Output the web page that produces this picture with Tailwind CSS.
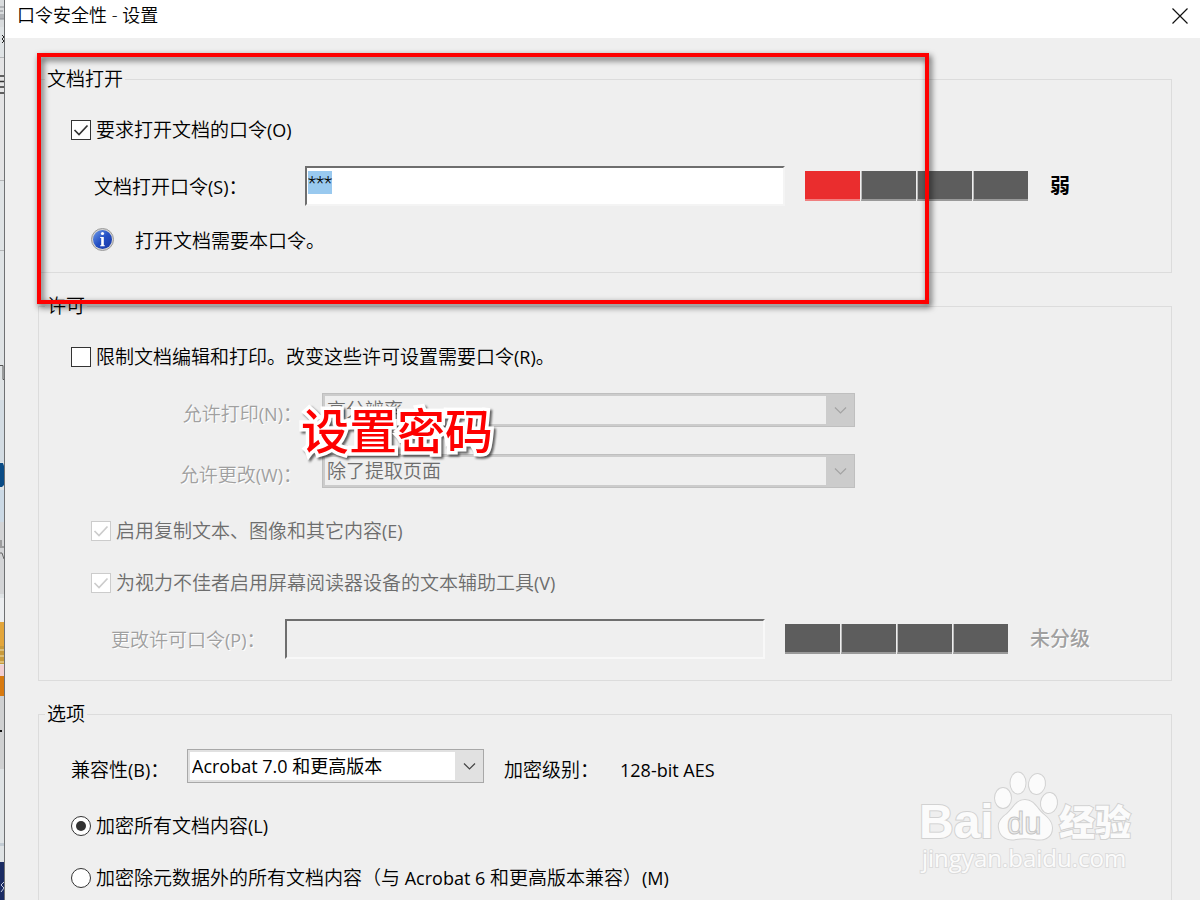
<!DOCTYPE html>
<html lang="zh-CN">
<head>
    <meta charset="UTF-8">
    <meta name="viewport" content="width=device-width, initial-scale=1.0">
    <title>口令安全性 - 设置</title>
    <script src="https://cdn.jsdelivr.net/npm/@tailwindcss/browser@4"></script>
</head>
<body class="relative flex h-screen overflow-hidden bg-[#efefef] font-['Open_Sans','Noto_Sans_CJK_SC',sans-serif] text-[19px] leading-[26px] font-[350] text-black">
    <!-- Window behind the dialog -->
    <svg class="h-full w-[5px] shrink-0" viewBox="0 0 5 900" preserveAspectRatio="xMinYMin slice" aria-hidden="true">
        <rect width="5" height="900" fill="#dfe3e5"/>
        <rect width="5" height="27" fill="#d9dcde"/>
        <path d="M0 7h4M0 11h3M1 14v5M3 14v5M0 19h4" stroke="#8a8d92" fill="none"/>
        <path d="M2 35l2 2-2 2 2 2-2 2" stroke="#222" fill="none"/>
        <path d="M0 57.500h4M0 180.500h4M0 250.500h4" stroke="#b4b6b8"/>
        <rect y="58" width="4" height="122" fill="#e4e4e5"/>
        <path d="M0 76h5M0 81.500h5M0 87h5M0 93h5" stroke="#333" stroke-width="1.500"/>
        <path d="M0 365.500h3v14h2" stroke="#555" fill="none"/>
        <rect y="400" width="4" height="62" fill="#d3dce3"/>
        <path d="M0 463h3l1 3v19l-2 2H0z" fill="#0b4c86"/>
        <rect y="490" width="4" height="32" fill="#cbd9e5"/>
        <rect y="522" width="4" height="72" fill="#d3d4d6"/>
        <path d="M0 547h4M1 540v6M0 553h2l2 6" stroke="#666" fill="none"/>
        <rect y="598" width="4" height="24" fill="#eceef0"/>
        <rect y="622" width="4" height="24" fill="#e3a63b"/>
        <rect y="646" width="4" height="18" fill="#c99b3c"/>
        <path d="M0 650h4M0 656h4M0 662h4" stroke="#f3e3b4"/>
        <rect y="665" width="4" height="11" fill="#f2cfd2"/>
        <rect y="676" width="4" height="20" fill="#d87a10"/>
        <rect y="696" width="4" height="73" fill="#cfd0d1"/>
        <rect y="730" width="2" height="2" fill="#111"/>
        <rect y="843" width="4" height="3" fill="#c3ccd4"/>
        <rect y="862" width="4" height="38" fill="#1a2b63"/>
        <path d="M4 882l-3 3 3 3-3 4" stroke="#c7cde0" fill="none"/>
        <rect x="4" width="1" height="900" fill="#6f7173"/>
    </svg>

    <main class="flex min-w-0 flex-1 flex-col">
        <!-- Title bar -->
        <header class="flex h-[38px] shrink-0 items-start justify-between bg-white pt-0.5 pr-3 pl-3">
            <h1 class="text-[18px]">口令安全性 - 设置</h1>
            <button type="button" aria-label="关闭" class="mt-1.5 size-4">
                <svg class="size-4" viewBox="0 0 16 16" fill="none" stroke="#111" stroke-width="1.200"><path d="M.5.500l15 15M15.500.500l-15 15"/></svg>
            </button>
        </header>

        <form class="flex min-h-0 flex-1 flex-col gap-5 pt-7 pr-7 pl-[33px]">
            <!-- Document open -->
            <fieldset class="h-[207px] border border-[#dcdcdc]">
                <legend class="ml-1.5 px-0.5">文档打开</legend>
                <div class="flex flex-col pt-[25px] pl-8">
                    <label class="flex items-center gap-[5px]">
                        <span class="grid *:col-start-1 *:row-start-1">
                            <input type="checkbox" checked class="size-5 appearance-none border border-[#333] bg-white">
                            <svg class="pointer-events-none size-5" viewBox="0 0 20 20" fill="none" stroke="#333" stroke-width="1.700"><path d="M3.500 10l4.500 4.500L16.500 5.500"/></svg>
                        </span>
                        <span>要求打开文档的口令<span class="text-[18px] font-normal">(O)</span></span>
                    </label>
                    <div class="mt-[23px] flex items-center pl-[23px]">
                        <label for="openPassword" class="w-[211px] pt-0.5">文档打开口令<span class="text-[18px] font-normal">(S)</span>：</label>
                        <input type="text" id="openPassword" value="***" autocomplete="off" spellcheck="false"
                               class="h-10 w-[480px] border-2 border-t-[#6e6e6e] border-r-[#f4f4f4] border-b-[#f4f4f4] border-l-[#6e6e6e] bg-white pb-2 pl-px font-[Roboto,sans-serif] leading-[26px] font-light outline-none selection:bg-[#99c9ef] selection:text-black">
                        <div class="ml-5 flex gap-px" role="img" aria-label="口令强度：弱">
                            <span class="h-[30px] w-[55px] border-b-2 border-[#f07f7f] bg-[#ea2d2e]"></span>
                            <span class="h-[30px] w-[55px] border-b-2 border-l border-b-[#999] border-l-[#bbb] bg-[#5d5d5d]"></span>
                            <span class="h-[30px] w-[55px] border-b-2 border-l border-b-[#999] border-l-[#bbb] bg-[#5d5d5d]"></span>
                            <span class="h-[30px] w-[55px] border-b-2 border-l border-b-[#999] border-l-[#bbb] bg-[#5d5d5d]"></span>
                        </div>
                        <span class="ml-[22px] text-[20px] font-bold">弱</span>
                    </div>
                    <div class="mt-5 flex items-center gap-5 pl-5">
                        <svg class="size-6" viewBox="0 0 24 24" aria-hidden="true">
                            <defs>
                                <linearGradient id="infoBlue" x1="0" y1="0" x2="1" y2="1">
                                    <stop offset="0" stop-color="#6f9be8"/>
                                    <stop offset=".5" stop-color="#2450c4"/>
                                    <stop offset="1" stop-color="#1634a4"/>
                                </linearGradient>
                            </defs>
                            <circle cx="11.500" cy="11.500" r="11" fill="#d3d3d3" stroke="#9a9a9a"/>
                            <circle cx="11.500" cy="11.500" r="9.500" fill="url(#infoBlue)"/>
                            <circle cx="11.500" cy="5.500" r="1.600" fill="#fff"/>
                            <path d="M10.200 9h2.600v8.200h1v1.100H9.200v-1.100h1V10h-1V9z" fill="#fff"/>
                        </svg>
                        <span class="pt-0.5">打开文档需要本口令。</span>
                    </div>
                </div>
            </fieldset>

            <!-- Permissions -->
            <fieldset class="h-[388px] border border-[#dcdcdc]">
                <legend class="ml-1.5 px-0.5">许可</legend>
                <div class="flex flex-col pt-[25px] pl-8">
                    <label class="flex items-center gap-[5px]">
                        <input type="checkbox" class="size-5 appearance-none border border-[#333] bg-white">
                        <span>限制文档编辑和打印。改变这些许可设置需要口令<span class="text-[18px] font-normal">(R)</span>。</span>
                    </label>
                    <div class="mt-[23px] flex items-center">
                        <label for="printing" class="w-[231px] pt-2 text-right text-[#a0a0a0] text-shadow-[1px_1px_0_#fff]">允许打印<span class="text-[18px] font-normal">(N)</span>：</label>
                        <div class="relative ml-5 h-[34px] w-[533px]">
                            <select id="printing" disabled class="block size-full appearance-none border border-[#bfbfbf] bg-[#efefef] pl-1 text-[#6d6d6d] opacity-100 inset-shadow-[0_0_0_2px_#ccc]"><option>高分辨率</option></select>
                            <svg class="pointer-events-none absolute top-px right-px h-8 w-7 bg-[#ccc]" viewBox="0 0 28 32" fill="none" stroke="#a3a3a3" stroke-width="1.200"><path d="M9 13.500l5.500 5.500 5.500-5.500"/></svg>
                        </div>
                    </div>
                    <div class="mt-[27px] flex items-center">
                        <label for="changes" class="w-[231px] pt-2 text-right text-[#a0a0a0] text-shadow-[1px_1px_0_#fff]">允许更改<span class="text-[18px] font-normal">(W)</span>：</label>
                        <div class="relative ml-5 h-[34px] w-[533px]">
                            <select id="changes" disabled class="block size-full appearance-none border border-[#bfbfbf] bg-[#efefef] pl-1 text-[#6d6d6d] opacity-100 inset-shadow-[0_0_0_2px_#ccc]"><option>除了提取页面</option></select>
                            <svg class="pointer-events-none absolute top-px right-px h-8 w-7 bg-[#ccc]" viewBox="0 0 28 32" fill="none" stroke="#a3a3a3" stroke-width="1.200"><path d="M9 13.500l5.500 5.500 5.500-5.500"/></svg>
                        </div>
                    </div>
                    <label class="mt-[30px] flex items-center gap-[5px] pl-5 text-[#6d6d6d]">
                        <span class="grid *:col-start-1 *:row-start-1">
                            <input type="checkbox" checked disabled class="size-5 appearance-none border border-[#ccc] bg-white">
                            <svg class="pointer-events-none size-5" viewBox="0 0 20 20" fill="none" stroke="#ccc" stroke-width="1.700"><path d="M3.500 10l4.500 4.500L16.500 5.500"/></svg>
                        </span>
                        <span>启用复制文本、图像和其它内容<span class="text-[18px] font-normal">(E)</span></span>
                    </label>
                    <label class="mt-[26px] flex items-center gap-[5px] pl-5 text-[#6d6d6d]">
                        <span class="grid *:col-start-1 *:row-start-1">
                            <input type="checkbox" checked disabled class="size-5 appearance-none border border-[#ccc] bg-white">
                            <svg class="pointer-events-none size-5" viewBox="0 0 20 20" fill="none" stroke="#ccc" stroke-width="1.700"><path d="M3.500 10l4.500 4.500L16.500 5.500"/></svg>
                        </span>
                        <span>为视力不佳者启用屏幕阅读器设备的文本辅助工具<span class="text-[18px] font-normal">(V)</span></span>
                    </label>
                    <div class="mt-[23px] flex items-center pl-10">
                        <label for="permPassword" class="w-[174px] pt-0.5 text-[#a0a0a0] text-shadow-[1px_1px_0_#fff]">更改许可口令<span class="text-[18px] font-normal">(P)</span>：</label>
                        <input type="password" id="permPassword" disabled
                               class="h-10 w-[480px] border-2 border-t-[#6e6e6e] border-r-[#f8f8f8] border-b-[#f8f8f8] border-l-[#6e6e6e] bg-[#efefef] px-0.5">
                        <div class="ml-5 flex gap-px" role="img" aria-label="口令强度：未分级">
                            <span class="h-[30px] w-[55px] border-b-2 border-[#999] bg-[#5d5d5d]"></span>
                            <span class="h-[30px] w-[55px] border-b-2 border-l border-b-[#999] border-l-[#bbb] bg-[#5d5d5d]"></span>
                            <span class="h-[30px] w-[55px] border-b-2 border-l border-b-[#999] border-l-[#bbb] bg-[#5d5d5d]"></span>
                            <span class="h-[30px] w-[55px] border-b-2 border-l border-b-[#999] border-l-[#bbb] bg-[#5d5d5d]"></span>
                        </div>
                        <span class="ml-[22px] text-[20px] font-medium text-[#a0a0a0] text-shadow-[1px_1px_0_#fff]">未分级</span>
                    </div>
                </div>
            </fieldset>

            <!-- Options -->
            <fieldset class="flex-1 border border-b-0 border-[#dcdcdc]">
                <legend class="ml-1.5 px-0.5">选项</legend>
                <div class="flex flex-col pt-[22px] pl-8">
                    <div class="flex items-center">
                        <label for="compat" class="w-[116px] pt-2">兼容性<span class="text-[18px] font-normal">(B)</span>：</label>
                        <div class="relative h-[34px] w-[297px]">
                            <select id="compat" class="block size-full appearance-none border border-[#a8a8a8] bg-white pl-1 text-[18px] font-normal inset-shadow-[0_0_0_2px_#e1e1e1]"><option>Acrobat 7.0 和更高版本</option></select>
                            <svg class="pointer-events-none absolute top-px right-px h-8 w-7 bg-[#e1e1e1]" viewBox="0 0 28 32" fill="none" stroke="#444" stroke-width="1.200"><path d="M9 13.500l5.500 5.500 5.500-5.500"/></svg>
                        </div>
                        <span class="ml-5 w-[116px] pt-2">加密级别：</span>
                        <span class="pt-2 text-[18px] font-normal">128-bit AES</span>
                    </div>
                    <label class="mt-[30px] flex items-center gap-[5px]">
                        <span class="grid *:col-start-1 *:row-start-1">
                            <input type="radio" name="scope" checked class="size-5 appearance-none rounded-full border border-[#333] bg-white">
                            <svg class="pointer-events-none size-5" viewBox="0 0 20 20"><circle cx="10" cy="10" r="5" fill="#333"/></svg>
                        </span>
                        <span>加密所有文档内容<span class="text-[18px] font-normal">(L)</span></span>
                    </label>
                    <label class="mt-[26px] flex items-center gap-[5px]">
                        <input type="radio" name="scope" class="size-5 appearance-none rounded-full border border-[#333] bg-white">
                        <span>加密除元数据外的所有文档内容（与<span class="text-[18px] font-normal"> Acrobat 6 </span>和更高版本兼容）<span class="text-[18px] font-normal">(M)</span></span>
                    </label>
                </div>
            </fieldset>
        </form>
    </main>

    <!-- Highlight frame and caption -->
    <div class="pointer-events-none absolute top-[53px] left-[37px] h-[251px] w-[892px] border-4 border-[#fe0000] drop-shadow-[2px_3px_3px_rgba(0,0,0,0.7)]"></div>
    <p class="pointer-events-none absolute top-[401px] left-[301px] text-[48px] leading-[60px] font-medium text-[#fe0000] drop-shadow-[2px_2px_1px_rgba(0,0,0,0.6)] [-webkit-text-stroke:7px_#fff] [paint-order:stroke_fill]">设置密码</p>

    <!-- Watermark -->
    <svg class="pointer-events-none absolute top-[765px] left-[915px] h-[115px] w-[230px]" viewBox="0 0 230 115" aria-hidden="true">
        <g fill="#fbfbfb" stroke="#d2d2d2" stroke-width="2" paint-order="stroke">
            <ellipse cx="88" cy="33" rx="8" ry="10"/>
            <ellipse cx="103" cy="18" rx="7.500" ry="10.500"/>
            <ellipse cx="122" cy="19" rx="8" ry="10" transform="rotate(10 122 19)"/>
            <ellipse cx="134" cy="38" rx="8" ry="10" transform="rotate(8 134 38)"/>
            <path d="M110 35c-9 0-12 9-18 14-6 4-9 9-8 14 1 9 9 13 17 11 6-1 12-1 18 0 9 2 18-1 18-11 0-6-4-10-9-14-6-5-9-14-18-14z"/>
            <text x="4" y="73" font-family="Liberation Sans" font-weight="700" font-size="48">Bai</text>
            <text x="144" y="71" font-family="Noto Sans CJK SC" font-weight="900" font-size="36">经验</text>
            <text x="7" y="102" font-family="Open Sans" font-weight="400" font-size="24" stroke="#dcdcdc">jingyan.baidu.com</text>
        </g>
        <text x="92" y="69" font-family="Liberation Sans" font-weight="400" font-size="31" fill="#efefef" stroke="#c6c6c6" stroke-width="1">du</text>
    </svg>

    <script>
        var openPassword = document.getElementById('openPassword');
        openPassword.focus();
        openPassword.select();
    </script>
</body>
</html>
